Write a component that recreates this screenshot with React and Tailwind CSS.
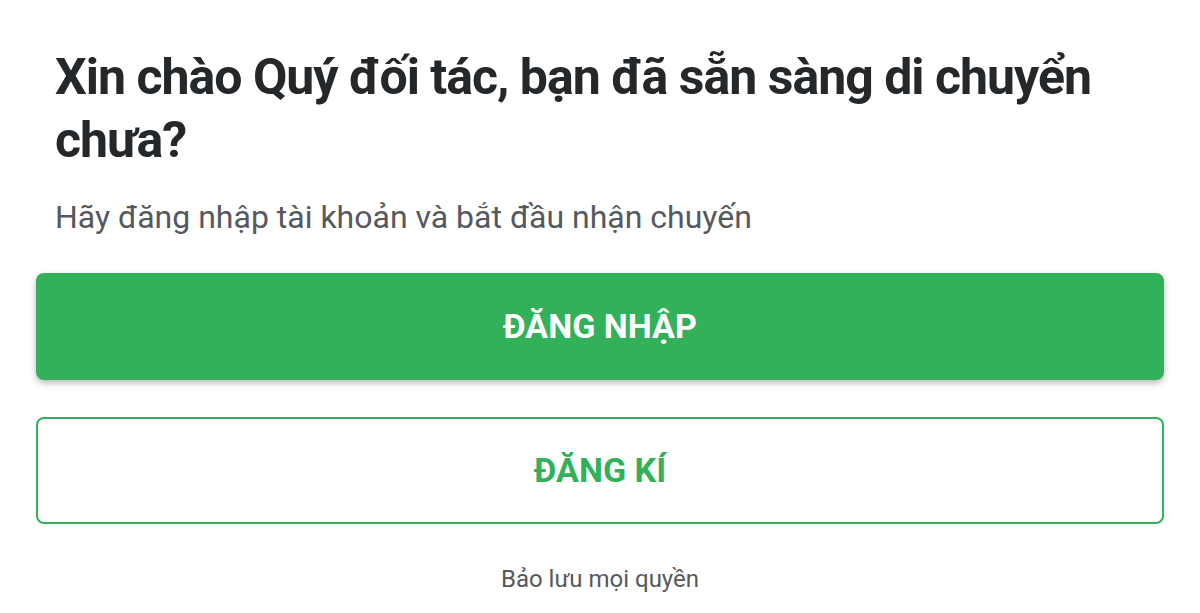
export default function App() {
  return (
    <div
      className="min-h-[613px] w-[1200px] bg-white px-9 pt-[46px]"
      style={{ fontFamily: 'Roboto, "Noto Sans", sans-serif' }}
    >
      <div className="pl-[19px] pr-[40px]">
        <h1 className="text-[50px] font-bold leading-[63px] tracking-[-1px] text-[#25282b]">
          Xin chào Quý đối tác, bạn đã sẵn sàng di chuyển chưa?
        </h1>
        <p className="mt-[25px] text-[32px] leading-[40px] text-[#55595e]">
          Hãy đăng nhập tài khoản và bắt đầu nhận chuyến
        </p>
      </div>

      <div className="mt-[36px] flex flex-col gap-[37px]">
        <button className="flex h-[107px] items-center justify-center rounded-lg bg-[#33b05a] text-[34px] font-bold text-white shadow-[0_3px_6px_rgba(0,0,0,0.28)]">
          ĐĂNG NHẬP
        </button>
        <button className="flex h-[107px] items-center justify-center rounded-lg border-2 border-[#33b05a] bg-white text-[34px] font-bold text-[#33b05a]">
          ĐĂNG KÍ
        </button>
      </div>

      <p className="mt-[39px] text-center text-[24px] leading-[32px] text-[#55595e]">
        Bảo lưu mọi quyền
      </p>
    </div>
  );
}
